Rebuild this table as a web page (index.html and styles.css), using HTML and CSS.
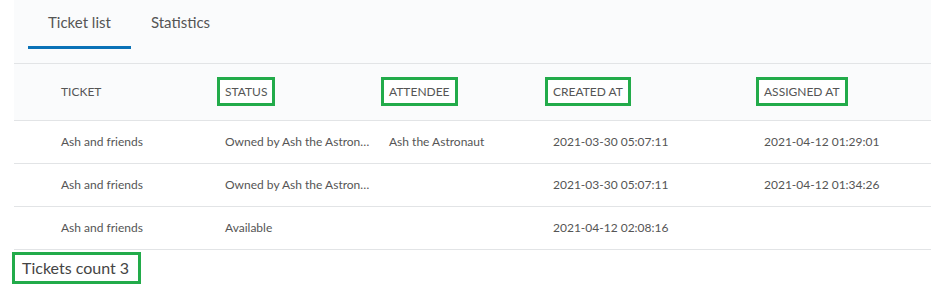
FILE: index.html
```html
<!DOCTYPE html>
<html>
<head>
<meta charset="utf-8">
<link rel="stylesheet" href="styles.css">
</head>
<body>
<div class="page">
  <div class="tabs">
    <div class="tab active">Ticket list</div>
    <div class="tab">Statistics</div>
  </div>
  <table class="tickets">
    <colgroup>
      <col class="c-pad"><col class="c1"><col class="c2"><col class="c3"><col class="c4"><col class="c5">
    </colgroup>
    <thead>
      <tr>
        <th></th>
        <th><span class="lbl">TICKET</span></th>
        <th><span class="lbl mark">STATUS</span></th>
        <th><span class="lbl mark">ATTENDEE</span></th>
        <th><span class="lbl mark">CREATED AT</span></th>
        <th><span class="lbl mark">ASSIGNED AT</span></th>
      </tr>
    </thead>
    <tbody>
      <tr>
        <td></td>
        <td>Ash and friends</td>
        <td class="trunc">Owned by Ash the Astronaut</td>
        <td>Ash the Astronaut</td>
        <td>2021-03-30 05:07:11</td>
        <td>2021-04-12 01:29:01</td>
      </tr>
      <tr>
        <td></td>
        <td>Ash and friends</td>
        <td class="trunc">Owned by Ash the Astronaut</td>
        <td></td>
        <td>2021-03-30 05:07:11</td>
        <td>2021-04-12 01:34:26</td>
      </tr>
      <tr>
        <td></td>
        <td>Ash and friends</td>
        <td>Available</td>
        <td></td>
        <td>2021-04-12 02:08:16</td>
        <td></td>
      </tr>
    </tbody>
  </table>
  <div class="footer"><span class="count">Tickets count 3</span></div>
</div>
</body>
</html>
```
FILE: styles.css
```css
* { box-sizing: border-box; }
html, body { margin: 0; padding: 0; background: #ffffff; }
body {
  font-family: Lato, "Open Sans", sans-serif;
  color: #555555;
}
.page {
  padding: 0 2px 0 14px;
}
.tabs {
  display: flex;
  height: 64px;
  background: #fafbfc;
  border-bottom: 1px solid #e2e4e6;
  padding-left: 14px;
  align-items: flex-start;
}
.tab {
  font-size: 15px;
  color: #555;
  padding: 13px 20px 0;
  height: 49px;
  border-bottom: 3px solid transparent;
}
.tab.active {
  border-bottom-color: #0a72b7;
}
.tickets {
  width: 917px;
  border-collapse: collapse;
  table-layout: fixed;
}
.c-pad { width: 31px; }
.c1 { width: 164px; }
.c2 { width: 164px; }
.c3 { width: 164px; }
.c4 { width: 211px; }
.c5 { width: 183px; }
thead tr {
  background: #fafbfc;
  height: 56px;
}
th {
  text-align: left;
  font-weight: normal;
  font-size: 12px;
  color: #555;
  padding: 0 0 0 16px;
  border-bottom: 1px solid #e2e4e6;
}
th:first-child, td:first-child { padding: 0; }
.lbl { display: inline-block; padding: 4px 0; }
.lbl.mark {
  outline: 3px solid #22ab4a;
  outline-offset: 0;
  padding: 4px 5px;
  margin-left: -5px;
  background: #fff;
}
tbody tr { height: 43px; }
td {
  font-size: 12px;
  color: #555;
  padding: 0 0 0 16px;
  border-bottom: 1px solid #e2e4e6;
  white-space: nowrap;
  overflow: hidden;
}
td.trunc {
  text-overflow: ellipsis;
  padding-right: 2px;
}
.footer {
  padding-top: 2px;
}
.count {
  display: inline-block;
  margin-left: -2px;
  border: 3px solid #22ab4a;
  padding: 3px 9px 4px 7px;
  font-size: 16px;
  color: #444;
}
```
